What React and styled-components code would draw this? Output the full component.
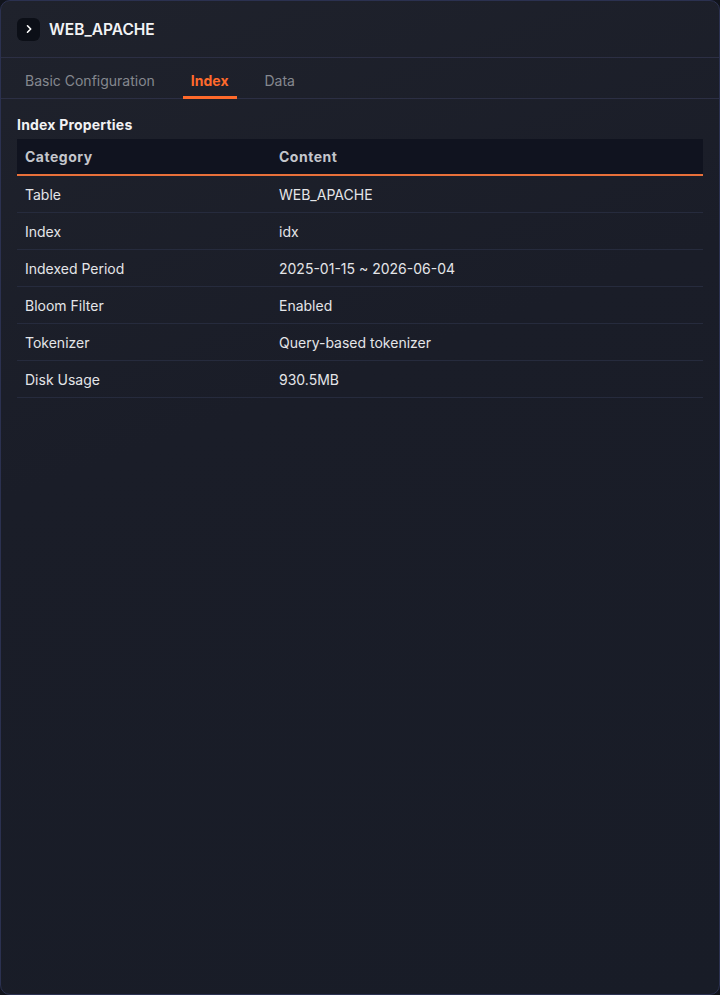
import React, { useState } from 'react';
import styled, { createGlobalStyle } from 'styled-components';

const GlobalStyle = createGlobalStyle`
  html, body {
    margin: 0;
    padding: 0;
    background: #11141c;
  }
  body {
    font-family: Inter, "Noto Sans", "Liberation Sans", sans-serif;
    -webkit-font-smoothing: antialiased;
  }
`;

const Panel = styled.div`
  box-sizing: border-box;
  width: 720px;
  height: 995px;
  border: 1px solid #2b3150;
  border-radius: 10px;
  background: linear-gradient(160deg, #1f222c 0%, #1a1d28 40%, #181c27 100%);
  display: flex;
  flex-direction: column;
  overflow: hidden;
`;

const Header = styled.div`
  display: flex;
  align-items: center;
  gap: 9px;
  height: 56px;
  padding: 0 16px;
  border-bottom: 1px solid #2c2f44;
`;

const IconBox = styled.div`
  width: 23px;
  height: 23px;
  border-radius: 6px;
  background: #0c0f17;
  display: flex;
  align-items: center;
  justify-content: center;
  color: #ffffff;
`;

const Title = styled.h1`
  margin: 0;
  font-size: 15.5px;
  font-weight: 600;
  color: #f2f3f5;
`;

const TabBar = styled.div`
  display: flex;
  gap: 20px;
  height: 40px;
  padding: 0 16px;
  border-bottom: 1px solid #2c2f44;
`;

const Tab = styled.button`
  background: none;
  border: none;
  padding: 6px 8px 0;
  font-family: inherit;
  font-size: 14px;
  font-weight: ${p => (p.$active ? 700 : 400)};
  color: ${p => (p.$active ? '#ff6a2b' : '#85888f')};
  cursor: pointer;
  display: flex;
  align-items: center;
  border-bottom: 3px solid ${p => (p.$active ? '#ff6a2b' : 'transparent')};
  margin-bottom: -1px;
`;

const Content = styled.div`
  padding: 17px 16px;
`;

const SectionTitle = styled.h2`
  margin: 0 0 6px;
  font-size: 14px;
  font-weight: 700;
  color: #f1f2f4;
  letter-spacing: 0.2px;
`;

const Table = styled.table`
  width: 100%;
  table-layout: fixed;
  border-collapse: collapse;
  font-size: 14px;
`;

const Th = styled.th`
  text-align: left;
  font-weight: 700;
  color: #c4c6cc;
  background: #10131f;
  height: 35px;
  padding: 0 8px;
  border-bottom: 2px solid #e8703a;
  letter-spacing: 0.5px;
  width: ${p => p.$width || 'auto'};
`;

const Td = styled.td`
  color: #e4e5e8;
  height: 36px;
  padding: 0 8px;
  border-bottom: 1px solid #262b3d;
`;

const rows = [
  ['Table', 'WEB_APACHE'],
  ['Index', 'idx'],
  ['Indexed Period', '2025-01-15 ~ 2026-06-04'],
  ['Bloom Filter', 'Enabled'],
  ['Tokenizer', 'Query-based tokenizer'],
  ['Disk Usage', '930.5MB'],
];

const tabs = ['Basic Configuration', 'Index', 'Data'];

export default function App() {
  const [tab, setTab] = useState('Index');

  return (
    <>
      <GlobalStyle />
      <Panel>
        <Header>
          <IconBox>
            <svg width="10" height="10" viewBox="0 0 10 10" fill="none">
              <path d="M3.5 1.8 L6.7 5 L3.5 8.2" stroke="#fff" strokeWidth="1.6" strokeLinecap="round" strokeLinejoin="round" />
            </svg>
          </IconBox>
          <Title>WEB_APACHE</Title>
        </Header>
        <TabBar>
          {tabs.map(t => (
            <Tab key={t} $active={tab === t} onClick={() => setTab(t)}>
              {t}
            </Tab>
          ))}
        </TabBar>
        <Content>
          <SectionTitle>Index Properties</SectionTitle>
          <Table>
            <thead>
              <tr>
                <Th $width="238px">Category</Th>
                <Th>Content</Th>
              </tr>
            </thead>
            <tbody>
              {rows.map(([k, v]) => (
                <tr key={k}>
                  <Td>{k}</Td>
                  <Td>{v}</Td>
                </tr>
              ))}
            </tbody>
          </Table>
        </Content>
      </Panel>
    </>
  );
}
